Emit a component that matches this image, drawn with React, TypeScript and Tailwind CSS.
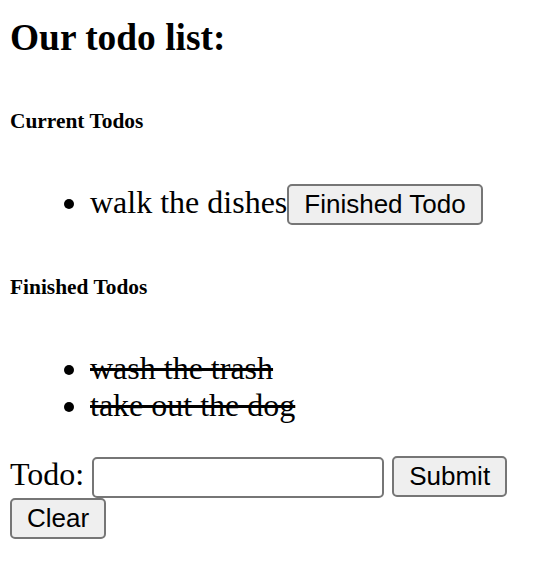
import React, { useState } from "react";

const btn =
  "inline-block align-baseline bg-[#efefef] border-2 border-[#767676] rounded-[5px] px-[15px] py-[2px] text-[26px] leading-[33px] text-black [font-family:'Liberation_Sans',Arial,sans-serif]";

export default function App() {
  const [text, setText] = useState("");
  return (
    <div className="pl-[10px] pt-[16px] bg-white text-black [font-family:'Liberation_Serif','Times_New_Roman',serif] text-[32px] leading-[37px] min-h-[586px]">
      <h3 className="text-[37.4px] font-bold leading-[43px] mb-[37px]">Our todo list:</h3>
      <h6 className="text-[21.4px] font-bold leading-[25px] mt-[50px] mb-[50px]">Current Todos</h6>
      <ul className="list-disc pl-[80px]">
        <li>
          walk the dishes<button className={btn}>Finished Todo</button>
        </li>
      </ul>
      <h6 className="text-[21.4px] font-bold leading-[25px] mt-[50px] mb-[50px]">Finished Todos</h6>
      <ul className="list-disc pl-[80px] mb-[32px]">
        <li className="line-through">wash the trash</li>
        <li className="line-through">take out the dog</li>
      </ul>
      <form onSubmit={(e) => e.preventDefault()}>
        <label>Todo: </label>
        <input
          value={text}
          onChange={(e) => setText(e.target.value)}
          className="inline-block align-baseline w-[292px] h-[41px] border-2 border-[#767676] rounded-[5px] bg-white px-[4px] text-[26px]"
        />{" "}
        <button type="submit" className={btn}>Submit</button>{" "}
        <button type="button" className={btn} onClick={() => setText("")}>Clear</button>
      </form>
    </div>
  );
}
